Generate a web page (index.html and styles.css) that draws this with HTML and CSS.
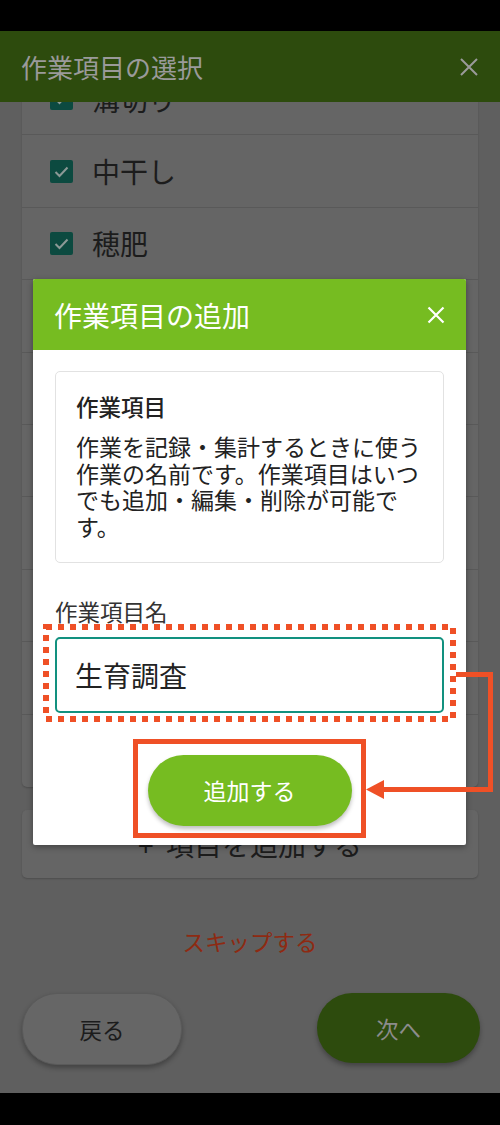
FILE: index.html
```html
<!DOCTYPE html>
<html lang="ja">
  <head>
    <meta charset="UTF-8" />
    <title>作業項目の選択</title>
    <link rel="stylesheet" href="styles.css">
  </head>
  <body>
    <div class="screen">
      <div class="statusbar"></div>

      <header class="appbar">
        <div class="appbar-title">作業項目の選択</div>
        <svg class="appbar-close" width="18" height="18" viewBox="0 0 18 18">
          <path d="M1 1 L17 17 M17 1 L1 17" stroke="#9a9a9a" stroke-width="2" />
        </svg>
      </header>

      <main class="content">
        <div class="list">
          <div class="row"><span class="check"></span><span class="label">溝切り</span></div>
          <div class="row"><span class="check"></span><span class="label">中干し</span></div>
          <div class="row"><span class="check"></span><span class="label">穂肥</span></div>
          <div class="row"><span class="check"></span></div>
          <div class="row"><span class="check"></span></div>
          <div class="row"><span class="check"></span></div>
          <div class="row"><span class="check"></span></div>
          <div class="row"><span class="check"></span></div>
          <div class="row"><span class="check"></span></div>
          <div class="row"><span class="check"></span></div>
        </div>

        <div class="add-item">+&nbsp;&nbsp;項目を追加する</div>

        <div class="skip">スキップする</div>

        <div class="actions">
          <div class="btn btn-back">戻る</div>
          <div class="btn btn-next">次へ</div>
        </div>
      </main>

      <div class="navbar"></div>

      <!-- モーダル -->
      <div class="modal">
        <div class="modal-header">
          <div class="modal-title">作業項目の追加</div>
          <svg width="18" height="18" viewBox="0 0 18 18">
            <path d="M1.5 1.5 L16.5 16.5 M16.5 1.5 L1.5 16.5" stroke="#fff" stroke-width="2.2" />
          </svg>
        </div>
        <div class="modal-body">
          <div class="info">
            <div class="info-title">作業項目</div>
            <div class="info-text">作業を記録・集計するときに使う作業の名前です。作業項目はいつでも追加・編集・削除が可能です。</div>
          </div>
          <div class="field-label">作業項目名</div>
          <input class="field" type="text" value="生育調査" />
          <div class="submit">追加する</div>
        </div>
      </div>

      <!-- 注釈 -->
      <svg class="notes" width="500" height="1125" viewBox="0 0 500 1125">
        <rect x="46" y="627" width="407" height="92" fill="none" stroke="#ef5026" stroke-width="6" stroke-dasharray="6 6" />
        <rect x="135.5" y="741.5" width="228" height="94" fill="none" stroke="#ef5026" stroke-width="5" />
        <path d="M456 674.5 H490.5 V789.5 H378" fill="none" stroke="#ef5026" stroke-width="5" />
        <polygon points="366,789.5 384,780 384,799" fill="#ef5026" />
      </svg>
    </div>
  </body>
</html>
```

FILE: styles.css
```css
body {
  margin: 0;
  font-family: "Noto Sans CJK JP", "Noto Sans", sans-serif;
  background: #000;
}
.screen {
  position: relative;
  width: 500px;
  height: 1125px;
  overflow: hidden;
  display: flex;
  flex-direction: column;
  background: #5f5f5f;
}
.statusbar {
  height: 31px;
  background: #000;
}
.navbar {
  height: 32px;
  background: #000;
}
.appbar {
  position: relative;
  z-index: 1;
  height: 71px;
  display: flex;
  align-items: center;
  justify-content: space-between;
  padding: 0 22px 0 21px;
  background: #2d4b0d;
}
.appbar-title {
  font-size: 26px;
  color: #9a9a9a;
}
.content {
  flex: 1;
  overflow: hidden;
  display: flex;
  flex-direction: column;
}
.list {
  margin: -39px 22px 0;
  background: #656565;
  border-radius: 0 0 5px 5px;
  box-shadow: 0 1px 2px rgba(0, 0, 0, 0.2);
}
.row {
  height: 72.4px;
  box-sizing: border-box;
  display: flex;
  align-items: center;
  padding-left: 28px;
  gap: 19px;
  border-bottom: 1px solid #595959;
}
.row:last-child {
  border-bottom: none;
}
.check {
  width: 23px;
  height: 23px;
  border-radius: 2px;
  background: #0c4a40 url("data:image/svg+xml,%3Csvg xmlns='http://www.w3.org/2000/svg' width='23' height='23'%3E%3Cpath d='M5.5 12 L9.5 16 L17.5 7.5' fill='none' stroke='%238c9996' stroke-width='2'/%3E%3C/svg%3E") no-repeat center;
}
.label {
  font-size: 28px;
  color: #1c1c1c;
}
.add-item {
  margin: 23px 22px 0;
  height: 68px;
  display: flex;
  align-items: center;
  justify-content: center;
  border-radius: 5px;
  background: #656565;
  box-shadow: 0 1px 2px rgba(0, 0, 0, 0.2);
  font-size: 28px;
  color: #1c1c1c;
}
.skip {
  margin-top: 47px;
  text-align: center;
  font-size: 22.5px;
  line-height: 33px;
  color: #8e2a12;
}
.actions {
  margin: 35px 20px 0 22px;
  display: flex;
  justify-content: space-between;
}
.btn {
  height: 70px;
  border-radius: 35px;
  display: flex;
  align-items: center;
  justify-content: center;
  font-size: 22.5px;
  box-shadow: 0 3px 5px rgba(0, 0, 0, 0.3);
}
.btn-back {
  width: 158px;
  background: #666;
  border: 1px solid #5a5a5a;
  color: #1c1c1c;
}
.btn-next {
  width: 163px;
  background: #2d4b0d;
  color: #8c8c8c;
}
.modal {
  position: absolute;
  top: 279px;
  left: 33px;
  width: 433px;
  background: #fff;
  border-radius: 2px;
  box-shadow: 0 2px 6px rgba(0, 0, 0, 0.35);
}
.modal-header {
  height: 71px;
  display: flex;
  align-items: center;
  justify-content: space-between;
  padding: 0 21px;
  background: #76bc21;
  border-radius: 2px 2px 0 0;
}
.modal-title {
  font-size: 28px;
  color: #fff;
}
.modal-body {
  padding: 21px 22px 19px;
  display: flex;
  flex-direction: column;
}
.info {
  border: 1px solid #e2e2e2;
  border-radius: 5px;
  padding: 21px 20px 22px;
  color: #222;
}
.info-title {
  font-size: 22.5px;
  line-height: 27px;
  font-weight: 500;
}
.info-text {
  margin-top: 13px;
  font-size: 23px;
  line-height: 26.7px;
}
.field-label {
  margin-top: 35px;
  font-size: 22.5px;
  line-height: 27px;
  color: #333;
}
.field {
  margin: 12px 0 0;
  height: 76px;
  box-sizing: border-box;
  border: 2px solid #12917f;
  border-radius: 5px;
  padding: 0 0 0 18px;
  font-family: "Noto Sans CJK JP", "Noto Sans", sans-serif;
  font-size: 28px;
  color: #222;
  outline: none;
}
.submit {
  margin: 42px auto 0;
  width: 204px;
  height: 71px;
  border-radius: 36px;
  display: flex;
  align-items: center;
  justify-content: center;
  background: #76bc21;
  color: #fff;
  font-size: 23px;
  box-shadow: 0 3px 4px rgba(0, 0, 0, 0.25);
}
.notes {
  position: absolute;
  top: 0;
  left: 0;
  pointer-events: none;
}
```
